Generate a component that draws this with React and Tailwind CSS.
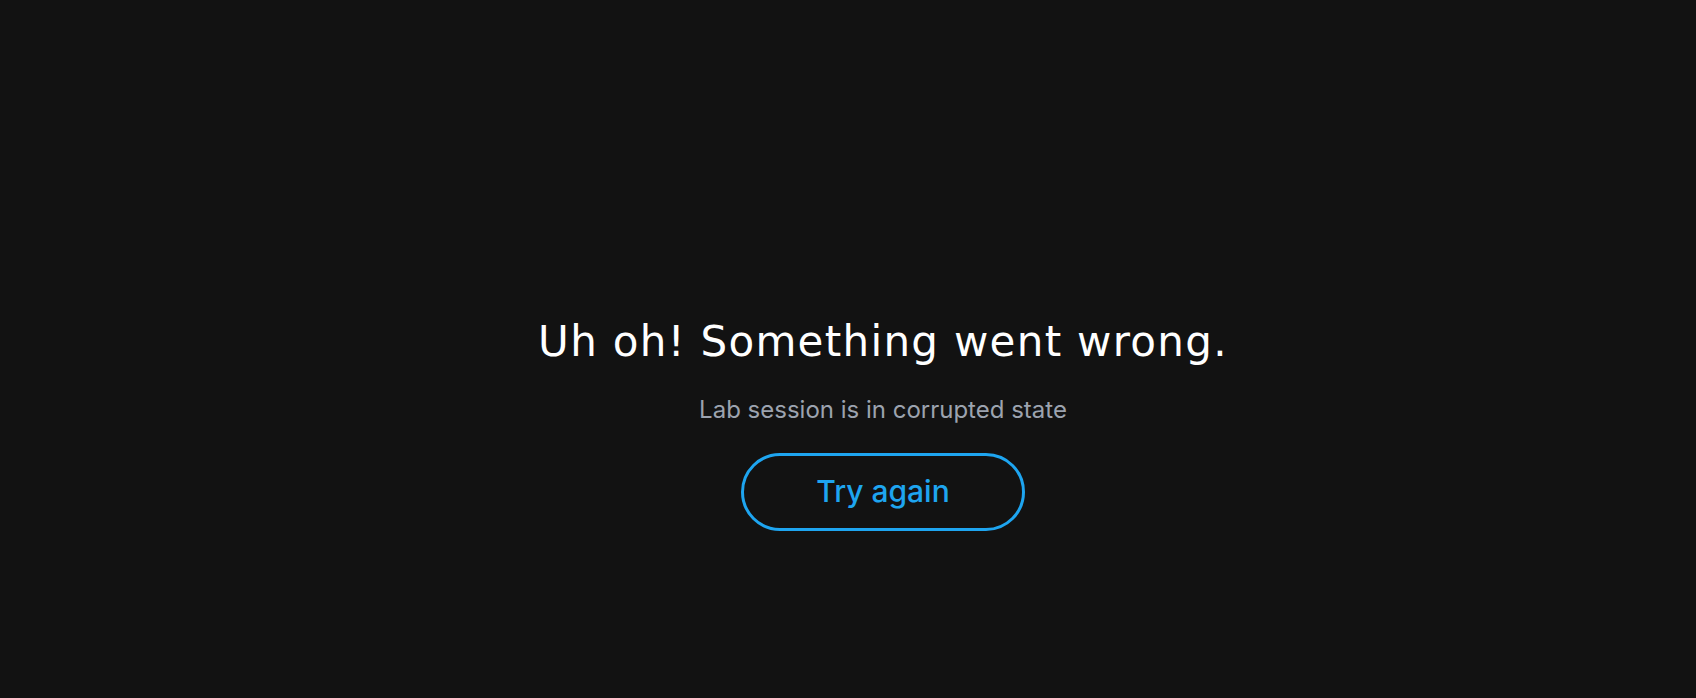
export default function App() {
  return (
    <div className="min-h-screen w-full bg-[#121212] flex flex-col items-center justify-center pt-[150px] pl-[70px]">
      <h1 className="text-[42px] leading-[48px] tracking-[1.3px] text-white font-['DejaVu_Sans',sans-serif] font-normal">
        Uh oh! Something went wrong.
      </h1>

      <p className="mt-[28px] text-[24px] leading-[32px] text-[#9ca3af] font-['Inter',sans-serif]">
        Lab session is in corrupted state
      </p>

      <button
        type="button"
        className="mt-[27px] w-[284px] h-[78px] rounded-full border-[3px] border-[#1ea5f0] text-[#1ea5f0] text-[30px] font-medium font-['Inter',sans-serif]"
      >
        Try again
      </button>
    </div>
  );
}
